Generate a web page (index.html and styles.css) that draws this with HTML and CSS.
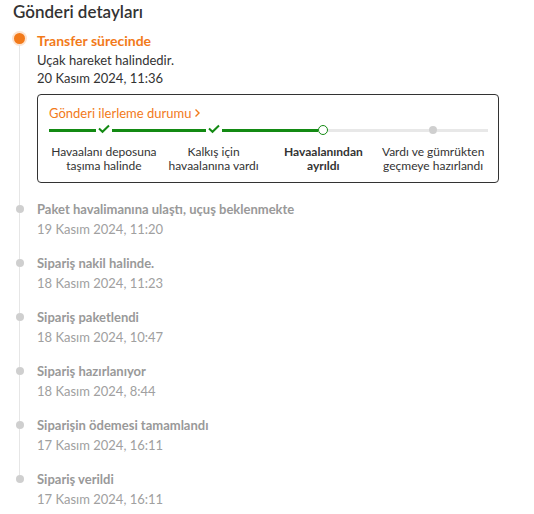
FILE: index.html
```html
<!DOCTYPE html>
<html lang="tr">
<head>
<meta charset="utf-8">
<title>Gönderi detayları</title>
<link rel="stylesheet" href="styles.css">
</head>
<body>
<div class="page">
  <h1 class="title">Gönderi detayları</h1>
  <ol class="timeline">
    <li class="item item-active item-first">
      <div class="marker"><span class="seg seg-top"></span><span class="dot dot-active"></span><span class="seg seg-bottom"></span></div>
      <div class="content">
        <div class="item-title active-title">Transfer sürecinde</div>
        <div class="desc">Uçak hareket halindedir.</div>
        <div class="desc">20 Kasım 2024, 11:36</div>
        <div class="progress-box">
          <div class="progress-head">Gönderi ilerleme durumu <svg class="chev" width="7" height="10" viewBox="0 0 7 10"><path d="M1.5 1.5 L5 5 L1.5 8.5" fill="none" stroke="#f27a1a" stroke-width="1.4"/></svg></div>
          <div class="steps">
            <div class="step">
              <div class="track"><span class="half green"></span><span class="mk mk-check"><svg width="16" height="12" viewBox="0 0 16 12"><path d="M3 4.5 L6.5 7.8 L13 1.5" fill="none" stroke="#138a13" stroke-width="2"/></svg></span><span class="half green"></span></div>
              <div class="step-label">Havaalanı deposuna<br>taşıma halinde</div>
            </div>
            <div class="step">
              <div class="track"><span class="half green"></span><span class="mk mk-check"><svg width="16" height="12" viewBox="0 0 16 12"><path d="M3 4.5 L6.5 7.8 L13 1.5" fill="none" stroke="#138a13" stroke-width="2"/></svg></span><span class="half green"></span></div>
              <div class="step-label">Kalkış için<br>havaalanına vardı</div>
            </div>
            <div class="step">
              <div class="track"><span class="half green"></span><span class="mk mk-ring"></span><span class="half grey"></span></div>
              <div class="step-label step-current">Havaalanından<br>ayrıldı</div>
            </div>
            <div class="step">
              <div class="track"><span class="half grey"></span><span class="mk mk-dot"></span><span class="half grey"></span></div>
              <div class="step-label">Vardı ve gümrükten<br>geçmeye hazırlandı</div>
            </div>
          </div>
        </div>
      </div>
    </li>
    <li class="item">
      <div class="marker"><span class="seg seg-top"></span><span class="dot"></span><span class="seg seg-bottom"></span></div>
      <div class="content">
        <div class="item-title">Paket havalimanına ulaştı, uçuş beklenmekte</div>
        <div class="date">19 Kasım 2024, 11:20</div>
      </div>
    </li>
    <li class="item">
      <div class="marker"><span class="seg seg-top"></span><span class="dot"></span><span class="seg seg-bottom"></span></div>
      <div class="content">
        <div class="item-title">Sipariş nakil halinde.</div>
        <div class="date">18 Kasım 2024, 11:23</div>
      </div>
    </li>
    <li class="item">
      <div class="marker"><span class="seg seg-top"></span><span class="dot"></span><span class="seg seg-bottom"></span></div>
      <div class="content">
        <div class="item-title">Sipariş paketlendi</div>
        <div class="date">18 Kasım 2024, 10:47</div>
      </div>
    </li>
    <li class="item">
      <div class="marker"><span class="seg seg-top"></span><span class="dot"></span><span class="seg seg-bottom"></span></div>
      <div class="content">
        <div class="item-title">Sipariş hazırlanıyor</div>
        <div class="date">18 Kasım 2024, 8:44</div>
      </div>
    </li>
    <li class="item">
      <div class="marker"><span class="seg seg-top"></span><span class="dot"></span><span class="seg seg-bottom"></span></div>
      <div class="content">
        <div class="item-title">Siparişin ödemesi tamamlandı</div>
        <div class="date">17 Kasım 2024, 16:11</div>
      </div>
    </li>
    <li class="item item-last">
      <div class="marker"><span class="seg seg-top"></span><span class="dot"></span><span class="seg seg-bottom"></span></div>
      <div class="content">
        <div class="item-title">Sipariş verildi</div>
        <div class="date">17 Kasım 2024, 16:11</div>
      </div>
    </li>
  </ol>
</div>
</body>
</html>
```

FILE: styles.css
```css
* { box-sizing: border-box; }
html, body { margin: 0; padding: 0; background: #fff; }
body {
  font-family: Lato, "Open Sans", "Liberation Sans", sans-serif;
  font-size: 13px;
  color: #333;
}
.page { padding: 0 13px; width: 534px; }
.title {
  margin: 0;
  font-size: 17px;
  line-height: 24px;
  font-weight: 600;
  color: #333;
}
.timeline {
  list-style: none;
  margin: 7px 0 0 0;
  padding: 0;
}
.item {
  display: grid;
  grid-template-columns: 13px 1fr;
  column-gap: 11px;
}
.marker {
  display: flex;
  flex-direction: column;
  align-items: center;
}
.seg { width: 1px; background: #e6e6e6; }
.seg-top { height: 6px; flex: none; }
.seg-bottom { flex: 1; }
.item-first .seg-top { background: transparent; height: 2px; }
.item-last .seg-bottom { background: transparent; }
.dot {
  width: 8px; height: 8px;
  border-radius: 50%;
  background: #cfcfcf;
  flex: none;
}
.dot-active {
  width: 11px; height: 11px;
  background: #f27a1a;
  box-shadow: 0 0 0 2px #fde3cf;
}
.content { padding-bottom: 14px; min-width: 0; }
.item-first .content { padding-bottom: 16px; }
.item-title {
  font-weight: 700;
  line-height: 20px;
  color: #999;
}
.active-title { color: #f27a1a; font-size: 14px; }
.desc { line-height: 18px; color: #333; }
.date { line-height: 20px; color: #a0a0a0; }
.progress-box {
  margin-top: 7px;
  width: 462px;
  border: 1px solid #333;
  border-radius: 4px;
  padding: 9px 10px 9px 11px;
}
.progress-head {
  color: #f27a1a;
  line-height: 18px;
  display: flex;
  align-items: center;
  gap: 3px;
}
.chev { display: block; }
.steps {
  display: grid;
  grid-template-columns: repeat(4, 1fr);
  margin-top: 2px;
}
.track {
  height: 12px;
  display: flex;
  align-items: center;
}
.half { flex: 1; height: 3px; }
.green { background: #138a13; }
.grey { background: #e8e8e8; }
.mk { flex: none; display: flex; align-items: center; justify-content: center; }
.mk-check { width: 16px; height: 12px; }
.mk-check svg { display: block; }
.mk-ring {
  width: 10px; height: 10px;
  border: 1.5px solid #138a13;
  border-radius: 50%;
  background: #fff;
}
.mk-dot {
  width: 8px; height: 8px;
  border-radius: 50%;
  background: #cfcfcf;
}
.step-label {
  margin-top: 9px;
  text-align: center;
  font-size: 12px;
  line-height: 14px;
  white-space: nowrap;
}
.step-current { font-weight: 700; }
```
